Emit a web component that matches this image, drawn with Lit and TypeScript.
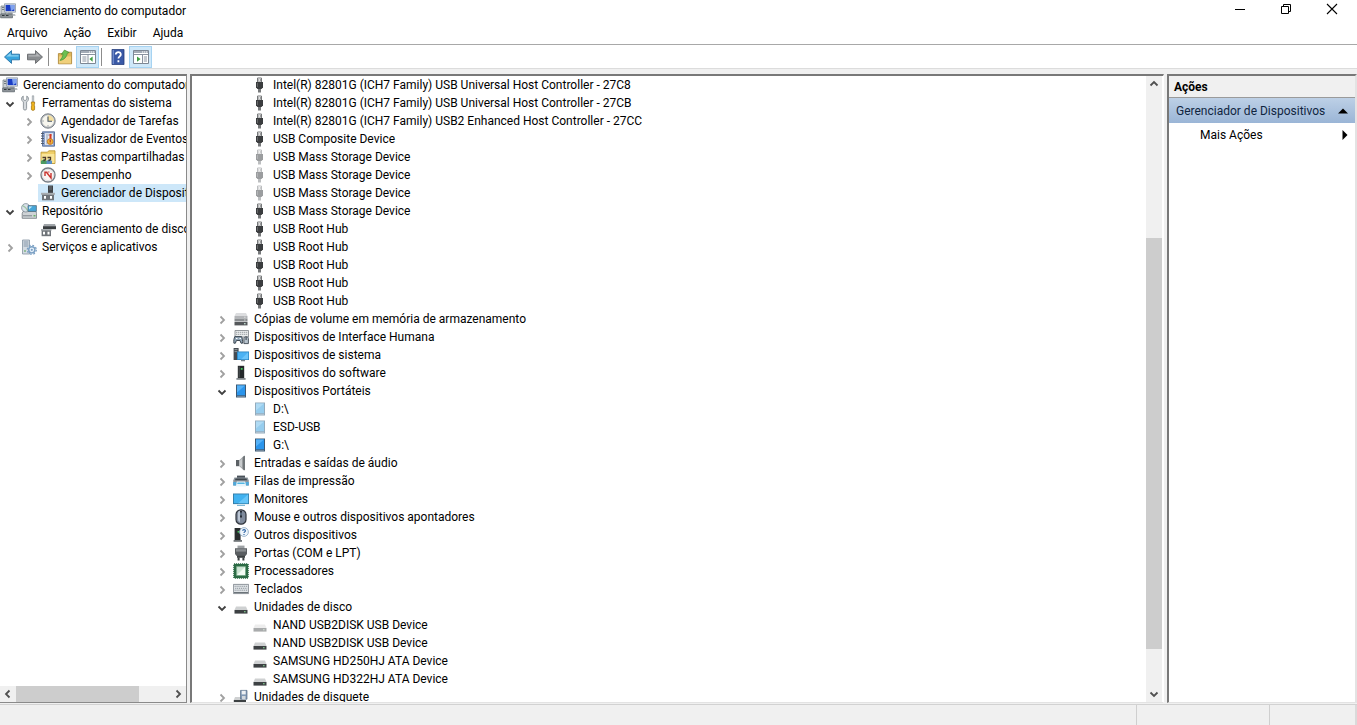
import { LitElement, html, css, svg, nothing, TemplateResult } from "lit";
import { customElement, property } from "lit/decorators.js";
import { classMap } from "lit/directives/class-map.js";

interface TreeNode {
  label: string;
  icon: string;
  open?: boolean;
  expandable?: boolean;
  selected?: boolean;
  children?: TreeNode[];
}

const usb = (body: string, metal: string) => svg`
  <path d="M5.5 1h4v4h-4z" fill="#fff" stroke=${metal} stroke-width="1"/>
  <path d="M6.3 2.4h1v1.2h-1zM8 2.4h1v1.2H8z" fill=${body}/>
  <path d="M4 5h7v5.2L9.6 12H5.4L4 10.2z" fill=${body}/>
  <path d="M6 12h3v3.5H6z" fill=${metal}/><path d="M5 6h1v4H5z" fill=${metal} opacity=".7"/>`;

const drive = (top: string, front: string, led: string) => svg`
  <path d="M3 7.4h10l1.5 3.6h-13z" fill=${top}/>
  <path d="M1.5 11h13v3.6h-13z" fill=${front}/>
  <path d="M11 12.3h1.6v1H11z" fill=${led}/>`;

const tablet = (a: string, b: string, frame: string) => svg`
  <path d="M3 1.5h10v13H3z" fill=${frame}/>
  <path d="M4 2.5h8v9.8H4z" fill=${a}/><path d="M4 2.5h8L4 9.500z" fill=${b}/>
  <path d="M4 12.900h8v.9H4z" fill="#fff" opacity=".35"/>`;

const panel = (body: TemplateResult) => svg`
  <path d="M.5 1.5h15v13H.5z" fill="#fff" stroke="#7d8794"/>
  <path d="M1 2h14v2H1z" fill="#a3abb6"/>
  <path d="M9 2.4h1.2v1.2H9zM11 2.4h1.2v1.2H11zM13 2.4h1.2v1.2H13z" fill="#fff"/>
  <path d="M1 5.500h14" stroke="#8a93a0"/>${body}`;

const ICONS: Record<string, TemplateResult> = {
  computer: svg`
    <path d="M1 3h5v8H1z" fill="#c9cdd0" stroke="#7c858c" stroke-width=".8"/>
    <path d="M2 4.5h3M2 6.5h3" stroke="#59656d" stroke-width=".8"/>
    <path d="M4.5.8h11v8.4h-11z" fill="#dfe4ea" stroke="#8d98a5" stroke-width=".8"/>
    <path d="M5.6 1.9h8.8v6.2H5.6z" fill="#1a3cc4"/><path d="M10 1.9h4.4v4L11 8z" fill="#7fa2ee"/>
    <path d="M8 9.3h4l1 1.7H7z" fill="#a7adb3"/>
    <path d="M.6 11h11.900v3.800H.6z" fill="#8d9398" stroke="#596167" stroke-width=".7"/>
    <path d="M2 12.5h2.500M6 12.5h2.500" stroke="#30383d"/><path d="M12.500 11h2.500l.6 2h-3z" fill="#b9bec2"/>`,
  tools: svg`
    <path d="M2.2 1v3.4L4 5.7l1.8-1.3V1C7.5 2 8 4 7 5.6L5.6 7v6.5a1.6 1.6 0 0 1-3.2 0V7L1 5.6C0 4 .6 2 2.2 1z" fill="#d6dade" stroke="#7d868d" stroke-width=".8"/>
    <path d="M11.300.8h1.400v6.4h-1.400z" fill="#e3e6e8" stroke="#7d868d" stroke-width=".6"/>
    <path d="M10.400 7h3.200v2l-.6 1 .6 1v3.4c0 1.2-3.200 1.2-3.200 0V11l.6-1-.6-1z" fill="#f1b61f" stroke="#9b6b08" stroke-width=".7"/>`,
  clock: svg`
    <circle cx="8" cy="8" r="7.2" fill="#b9bdc1" stroke="#6d747b" stroke-width=".9"/>
    <circle cx="8" cy="8" r="5.8" fill="#f7f6ee"/>
    <path d="M8 8V2.2A5.8 5.8 0 0 1 13.8 8z" fill="#f3dfa0"/>
    <path d="M8 3.6V8.3h4" fill="none" stroke="#4a5661" stroke-width="1.1"/>
    <path d="M8 12.4v1M2.6 8h1" stroke="#4a5661" stroke-width=".8"/>`,
  events: svg`
    <path d="M2.5.8h12v14.4h-12z" fill="#8fa5cf" stroke="#49618f" stroke-width=".8"/>
    <path d="M5 2.2h8v11.6H5z" fill="#e7ebf2"/>
    <path d="M6 4h6M6 6h2M6 8h2M6 10h2M6 12h2" stroke="#7e8da8" stroke-width=".8"/>
    <path d="M1 2.5h3M1 5h3M1 7.5h3M1 10h3M1 12.5h3" stroke="#4c5866" stroke-width=".9"/>
    <path d="M9.500 3h2v5h-2z" fill="#d63a24"/><circle cx="10.2" cy="10.6" r="2.9" fill="#f0b53a" stroke="#b9620d" stroke-width=".7"/>
    <path d="M10.2 8.8v2.2M10.2 11.6v.8" stroke="#a22" stroke-width="1"/>`,
  shared: svg`
    <path d="M1 3.2h6.500L8.700 1.800H15v12.700H1z" fill="#f0d06a" stroke="#b9922c" stroke-width=".8"/>
    <path d="M1.6 5h12.8V14H1.6z" fill="#f9e59a"/>
    <path d="M1 15v-3l3-2 3 2v3z" fill="#4c9b62"/><path d="M6.500 15v-3l2.500-2 3 2v3z" fill="#5a8fc4"/>
    <path d="M2.500 8.500h3v2l-2 1.500M7.500 8.500h3v2L8.500 12" fill="none" stroke="#4d3a2a" stroke-width="1.300"/>`,
  perf: svg`
    <circle cx="8" cy="8" r="7" fill="#fff" stroke="#777e85" stroke-width="1.4"/>
    <circle cx="8" cy="8" r="5.6" fill="#fbf5f3" stroke="#c7cace" stroke-width=".6"/>
    <path d="M5 9V5.200h1.500L11 11V6" fill="none" stroke="#c8322d" stroke-width="1.4"/>
    <path d="M7.500 5h2" stroke="#c8322d" stroke-width=".9"/>`,
  devmgr: svg`
    <path d="M8 .5h5v8H8z" fill="#3f4347"/><path d="M9 2h3M9 4h3" stroke="#7d8388" stroke-width=".8"/>
    <path d="M2 9h12v6.300H2z" fill="#6f7479"/><path d="M1 7.800h14v2H1z" fill="#a8adb1"/>
    <path d="M4 11h2v2.8H4zM10 11h2v2.8h-2z" fill="#fff"/>`,
  storage: svg`
    <path d="M2 8.5h13l.6 2v4.8H1.2v-4.8z" fill="#cfd3d6" stroke="#6e767c" stroke-width=".8"/>
    <path d="M2 12.8h9" stroke="#7b838a"/><path d="M12.5 12.2h2v1.2h-2z" fill="#4cae4c"/>
    <circle cx="4.8" cy="4.8" r="4.2" fill="#d9e2ea" stroke="#7d8a94" stroke-width=".8"/>
    <path d="M4.8 4.8 1.5 2.4M4.8 4.8l2 3" stroke="#9cc3a2" stroke-width="1.2"/>
    <path d="M7 2.6h8.4v5.8H7z" fill="#46a6d8" stroke="#58707f" stroke-width=".8"/><path d="M8 3.4h3.4L8 6.6z" fill="#c3e6f7"/>`,
  diskmgr: svg`
    <path d="M4 3h11l1 2.4H3z" fill="#a1a6aa"/><path d="M3 5.2h13v3H3z" fill="#3a3e41"/>
    <path d="M1 8h10.500v1.8H1z" fill="#a8adb1"/><path d="M1.6 9.4h9.400v5.8H1.6z" fill="#6f7479"/>
    <path d="M3 10.8h2v2.800H3zM7.500 10.800h2v2.800h-2z" fill="#fff"/>`,
  services: svg`
    <path d="M1.5 1h7v14h-7z" fill="#d4dbe2" stroke="#8493a2" stroke-width=".8"/>
    <path d="M2.6 3h4.8M2.6 5h4.8M2.6 7h4.8" stroke="#7d90a4" stroke-width=".9"/>
    <path d="M3 12h2" stroke="#58a258"/>
    <circle cx="10.8" cy="10.8" r="3.1" fill="#e6f0f9" stroke="#7ba0c4" stroke-width="1.5"/>
    <circle cx="10.8" cy="10.8" r="4.5" fill="none" stroke="#7ba0c4" stroke-width="1.3" stroke-dasharray="1.8 1.73"/>
    <circle cx="10.8" cy="10.8" r="1.1" fill="#7ba0c4"/>`,
  usb: usb("#3b3d3f", "#77797b"),
  usbOff: usb("#9b9d9f", "#bcbec0"),
  volume: svg`
    <path d="M3 2h10l1.5 3h-13z" fill="#dcdddf"/><path d="M1.5 5h13v2.600h-13z" fill="#b3b5b8"/>
    <path d="M1.5 7.600h13v2.8h-13z" fill="#8b8e91"/><path d="M1.5 10.900h13v3.500h-13z" fill="#55585b"/>
    <path d="M11 12.200h1.6v1H11z" fill="#dfe"/><path d="M11 6.200h1.6M11 9h1.6" stroke="#eee" stroke-width=".7"/>`,
  hid: svg`
    <path d="M2 1.5h13.5v6.500H2z" fill="#eceeef" stroke="#7c8186" stroke-width=".8"/>
    <path d="M3.2 3.3h11M3.2 5.3h11" stroke="#868b90" stroke-dasharray="1.1 .9"/>
    <path d="M1.800 7.600h6.800c.9 2 1.200 4 .9 6.600H8l-1-2.700H3.400l-1 2.700H.9c-.3-2.600 0-4.600.9-6.600z" fill="#8ea2b3" stroke="#3f4a54" stroke-width="1"/>
    <path d="M3 9.500h1.500M6.500 9.500H8" stroke="#fff" stroke-width="1"/>
    <path d="M10.900 14.600V9.6c0-2.600 4.500-2.600 4.500 0v5z" fill="#b7c3cd" stroke="#3f4a54" stroke-width=".9"/>
    <path d="M13.100 8v3" stroke="#333b44"/>`,
  system: svg`
    <path d="M.6 1h5v12h-5z" fill="#454b51"/><path d="M1.500 2.6h3M1.500 4.6h3" stroke="#a2a9ae" stroke-width=".8"/>
    <path d="M4 4.5h12v8.500H4z" fill="#2880bd"/><path d="M4.800 5.3h10.400v6.900H4.800z" fill="#4bb1f3"/>
    <path d="M15.200 5.3v6.900H8z" fill="#6cc4fa"/><path d="M8 13.200h4v1H8z" fill="#59646c"/>`,
  software: svg`
    <path d="M4.800.8h6.400v12.4H4.800z" fill="#25292b"/><path d="M5.600 1.6h1.2v11H5.600z" fill="#4a4f52"/>
    <path d="M7.800 3h1.8v1.8H7.800z" fill="#3fc95a"/><path d="M3.400 13h9.2v1.8H3.4z" fill="#83888b"/>`,
  tablet: tablet("#2b95ec", "#55b1f7", "#3b5873"),
  tabletOff: tablet("#96cdee", "#b0dbf4", "#93aabb"),
  audio: svg`
    <path d="M3 5h3.400v6.200H3z" fill="#5c6165"/><path d="M6.4 5 11 .8v14.600l-4.6-4.200z" fill="#a2a6a9"/>
    <path d="M9.800 1.900 12 .6v15l-2.200-1.300z" fill="#717679"/><path d="M6.6 6 9 3.8v8.6L6.6 10.6z" fill="#c8cbcd"/>`,
  printer: svg`
    <path d="M4 2.6h8v3H4z" fill="#4a525a"/><path d="M1.4 4.600h13.2l1.2 2.800v5H.2v-5z" fill="#8c959c"/>
    <path d="M2.500 5.400h11l.5 1.800H2z" fill="#3f464c"/><path d="M.2 9h3.400v3.400H.2zM12.400 9h3.400v3.400h-3.400z" fill="#4fa9db"/>
    <path d="M3.8 8.600h8.4l1 5H2.8z" fill="#e9f5fb"/><path d="M4.6 9.600h6.8l.4 1.400H4.200z" fill="#54b7e4"/>`,
  monitor: svg`
    <path d="M0 2.5h16v10.6H0z" fill="#347ca6"/><path d="M.9 3.4h14.2v8.8H.9z" fill="#41b2f0"/>
    <path d="M15.1 3.4v8.8H5z" fill="#66c5f8"/><path d="M4 13.8h8v1H4z" fill="#5fa7cb"/>`,
  mouse: svg`
    <rect x="3" y=".8" width="10" height="14.4" rx="4.8" fill="#7f8a9b" stroke="#30353d" stroke-width="1.2"/>
    <path d="M5 4c0-1.6 1-2 2-2.2V13c-1.4-.5-2-1.4-2-3z" fill="#bcc6d4"/>
    <path d="M7 2h2v6.6H7z" fill="#262b33"/><path d="M7.6 3.4h.8v3h-.8z" fill="#a3c6ea"/>`,
  other: svg`
    <path d="M1.6 1h6v12h-6z" fill="#282c2d"/><path d="M4.6 4h1.6v1.6H4.6z" fill="#45c45d"/>
    <path d="M.6 13h8.4v1.8H.6z" fill="#6e7376"/>
    <circle cx="11" cy="5" r="4.4" fill="#eef5fb" stroke="#8aa6bf" stroke-width=".8"/>
    <path d="M9.6 3.8c.2-1.7 3-1.5 2.8.1-.1 1-1.4 1-1.4 2.1M11 6.9v1" fill="none" stroke="#2c62a4" stroke-width="1.1"/>`,
  port: svg`
    <path d="M4.500.6h7v3h-7z" fill="#9da1a4"/><path d="M2 3.2h12v5.800l-1.6 2H3.6L2 9z" fill="#5a5e61"/>
    <path d="M3 4.200h10v2.400H3z" fill="#8b8f92"/><path d="M4 10.800h8v2H4z" fill="#3c4042"/>
    <path d="M4.600 12.6h2v2.800h-2zM9.4 12.6h2v2.800h-2z" fill="#3c4042"/>`,
  cpu: svg`
    <rect x="1" y="1" width="14" height="14" fill="#2c6b45" stroke="#2c6b45" stroke-width="1.6" stroke-dasharray="1.2 .8"/>
    <path d="M3.6 3.6h8.8v8.8H3.6z" fill="#cfe6d5" stroke="#7fae8e" stroke-width=".8"/><path d="M12 4v8H4z" fill="#f4fbf5"/>`,
  keyboard: svg`
    <path d="M.4 3.4h15.2v9.2H.4z" fill="#dfe3e6" stroke="#777f87" stroke-width=".8"/>
    <path d="M1.6 5.3h13M2.2 7.3h12M1.6 9.2h13" stroke="#8c949c" stroke-dasharray="1.1 .8"/>
    <path d="M1 11.6h14" stroke="#5f676e"/>`,
  drive: drive("#cfd1d2", "#3d4143", "#8ee09a"),
  driveOff: drive("#ededed", "#a9abac", "#d4e5d6"),
  floppy: svg`
    <path d="M2 8h7l1 3H.8z" fill="#cfd1d2"/><path d="M.8 11H13v3.4H.8z" fill="#3d4143"/>
    <path d="M7.500 1.4H14v8.8H7.500z" fill="#8299b5" stroke="#566b85" stroke-width=".7"/>
    <path d="M8.700 1.8h4v3.6h-4z" fill="#eef1f4"/><path d="M9 7h3.500v3.2H9z" fill="#d3d8dd"/>`,
  back: svg`<path d="M.5 8 7.500 1.600v3.600h8v5.600h-8v3.600z" fill="#37a4dd" stroke="#2a73a6" stroke-width=".9"/>
    <path d="M2.4 7.6 6.700 3.700v2.500h7.800v1.400z" fill="#8bd2f2"/>`,
  forward: svg`<path d="M15.500 8 8.500 1.600v3.600h-8v5.600h8v3.600z" fill="#8a8d90" stroke="#66696c" stroke-width=".9"/>
    <path d="M13.6 7.6 9.300 3.700v2.500H1.500v1.400z" fill="#b3b5b7"/>`,
  up: svg`
    <path d="M1.4 4.6h5l1-1.4h7.2v11.6H1.4z" fill="#e0b85a" stroke="#a98232" stroke-width=".8"/>
    <path d="M2 7.4h12v7H2z" fill="#f0d07c"/>
    <path d="M3 11.400C4.400 9.800 6 7.400 6 4.800l-1.800.6L7.500 1l4.700 2.600-1.900.6C10 7.800 7 11 3 11.400z" fill="#6cc052" stroke="#3b8a2c" stroke-width=".6"/>`,
  paneLeft: panel(svg`<path d="M8 6v8.500" stroke="#8a93a0"/><path d="M2.4 8h4M2.4 10h4M2.4 12h4" stroke="#8a93a0"/>
    <path d="M12.6 7.400v5.4L9.400 10.1z" fill="#3f9e42"/>`),
  paneRight: panel(svg`<path d="M9.500 6v8.500" stroke="#8a93a0"/><path d="M10.8 8h3.2M10.8 10h3.2M10.8 12h3.2" stroke="#8a93a0"/>
    <path d="M4 7.400v5.4l3.600-2.7z" fill="#3f9e42"/>`),
  help: svg`<path d="M2 .4h12v15.2H2z" fill="#3a59a6" stroke="#243b78" stroke-width=".8"/><path d="M2.6 1h1.4v14H2.6z" fill="#6f8aca"/>
    <path d="M5.8 5.6c0-3.4 5.2-3.2 5 0-.1 1.8-2.4 1.8-2.4 4M8.4 11.2v2" fill="none" stroke="#fff" stroke-width="1.8"/>`,
};

const icon = (name: string) =>
  html`<svg class="icon" viewBox="0 0 16 16" width="16" height="16" aria-hidden="true">${ICONS[name]}</svg>`;

const ARROWS: Record<string, string> = {
  up: "M1.500 6.500 5 3l3.500 3.500",
  down: "M1.500 3.500 5 7l3.500-3.500",
  left: "M6.500 1.500 3 5l3.500 3.500",
  right: "M3.500 1.500 7 5 3.500 8.500",
};

const arrow = (dir: string) => html`<svg class="arrow" viewBox="0 0 10 10" width="10" height="10" aria-hidden="true">
  <path d=${ARROWS[dir]} fill="none" stroke="currentColor" stroke-width="1.800" />
</svg>`;

const shared = css`
  * { box-sizing: border-box; }
  button {
    display: flex;
    align-items: center;
    justify-content: center;
    margin: 0;
    padding: 0;
    border: 0;
    background: none;
    color: inherit;
    font: inherit;
  }
  svg { display: block; flex: none; }
`;

@customElement("device-tree")
class DeviceTree extends LitElement {
  @property({ attribute: false }) nodes: TreeNode[] = [];
  @property() label = "";

  static styles = [
    shared,
    css`
      :host { display: block; }
      ul { list-style: none; margin: 0; padding: 0; }
      ul ul { padding-left: 19px; }
      .row { display: flex; align-items: center; height: 18px; }
      .toggle { width: 19px; height: 18px; flex: none; color: #a0a0a0; padding-top: 2px; }
      .toggle.open { color: #404040; }
      .item { display: flex; align-items: center; gap: 5px; flex: 1; min-width: 0; height: 18px; padding-left: 2px; }
      .item.selected { background: #cde7f9; }
      .label { white-space: pre; line-height: 18px; }
    `,
  ];

  private node(n: TreeNode): TemplateResult {
    const expandable = n.expandable || n.children;
    return html`<li role="treeitem" aria-selected=${n.selected ? "true" : "false"}>
      <div class="row">
        ${expandable
          ? html`<button class=${classMap({ toggle: true, open: !!n.open })} aria-label=${n.label}>
              ${arrow(n.open ? "down" : "right")}
            </button>`
          : html`<span class="toggle"></span>`}
        <div class=${classMap({ item: true, selected: !!n.selected })}>
          ${icon(n.icon)}<span class="label">${n.label}</span>
        </div>
      </div>
      ${n.children && n.open ? html`<ul role="group">${n.children.map((c) => this.node(c))}</ul>` : nothing}
    </li>`;
  }

  render() {
    return html`<ul role="tree" aria-label=${this.label}>${this.nodes.map((n) => this.node(n))}</ul>`;
  }
}

@customElement("scroll-bar")
class ScrollBar extends LitElement {
  @property({ reflect: true }) axis: "x" | "y" = "y";
  @property({ type: Number }) before = 0;
  @property({ type: Number }) size = 1;
  @property({ type: Number }) after = 0;

  static styles = [
    shared,
    css`
      :host { display: flex; flex: none; background: #f0f0f0; color: #505050; }
      :host([axis="y"]) { flex-direction: column; width: 16px; }
      :host([axis="x"]) { height: 16px; }
      button { width: 16px; height: 16px; flex: none; }
      .track { display: flex; flex: 1; flex-direction: inherit; }
      .thumb { background: #cdcdcd; }
    `,
  ];

  render() {
    const y = this.axis === "y";
    return html`
      <button aria-label=${y ? "Para cima" : "Para a esquerda"}>${arrow(y ? "up" : "left")}</button>
      <div class="track">
        <div style="flex-grow:${this.before}"></div>
        <div class="thumb" style="flex-grow:${this.size}"></div>
        <div style="flex-grow:${this.after}"></div>
      </div>
      <button aria-label=${y ? "Para baixo" : "Para a direita"}>${arrow(y ? "down" : "right")}</button>
    `;
  }
}

const CONSOLE: TreeNode[] = [
  {
    label: "Ferramentas do sistema", icon: "tools", open: true,
    children: [
      { label: "Agendador de Tarefas", icon: "clock", expandable: true },
      { label: "Visualizador de Eventos", icon: "events", expandable: true },
      { label: "Pastas compartilhadas", icon: "shared", expandable: true },
      { label: "Desempenho", icon: "perf", expandable: true },
      { label: "Gerenciador de Dispositivos", icon: "devmgr", selected: true },
    ],
  },
  {
    label: "Repositório", icon: "storage", open: true,
    children: [{ label: "Gerenciamento de disco", icon: "diskmgr" }],
  },
  { label: "Serviços e aplicativos", icon: "services", expandable: true },
];

const leaf = (icon: string, ...labels: string[]): TreeNode[] => labels.map((label) => ({ label, icon }));
const closed = (label: string, icon: string): TreeNode => ({ label, icon, expandable: true });

const USB_DEVICES: TreeNode[] = [
  ...leaf(
    "usb",
    "Intel(R) 82801G (ICH7 Family) USB Universal Host Controller - 27C8",
    "Intel(R) 82801G (ICH7 Family) USB Universal Host Controller - 27CB",
    "Intel(R) 82801G (ICH7 Family) USB2 Enhanced Host Controller - 27CC",
    "USB Composite Device",
  ),
  ...leaf("usbOff", "USB Mass Storage Device", "USB Mass Storage Device", "USB Mass Storage Device"),
  ...leaf("usb", "USB Mass Storage Device", "USB Root Hub", "USB Root Hub", "USB Root Hub", "USB Root Hub", "USB Root Hub"),
];

const DEVICES: TreeNode[] = [
  closed("Cópias de volume em memória de armazenamento", "volume"),
  closed("Dispositivos de Interface Humana", "hid"),
  closed("Dispositivos de sistema", "system"),
  closed("Dispositivos do software", "software"),
  {
    label: "Dispositivos Portáteis", icon: "tablet", open: true,
    children: [...leaf("tabletOff", "D:\\", "ESD-USB"), ...leaf("tablet", "G:\\")],
  },
  closed("Entradas e saídas de áudio", "audio"),
  closed("Filas de impressão", "printer"),
  closed("Monitores", "monitor"),
  closed("Mouse e outros dispositivos apontadores", "mouse"),
  closed("Outros dispositivos", "other"),
  closed("Portas (COM e LPT)", "port"),
  closed("Processadores", "cpu"),
  closed("Teclados", "keyboard"),
  {
    label: "Unidades de disco", icon: "drive", open: true,
    children: [
      ...leaf("driveOff", "NAND USB2DISK USB Device"),
      ...leaf("drive", "NAND USB2DISK USB Device", "SAMSUNG HD250HJ ATA Device", "SAMSUNG HD322HJ ATA Device"),
    ],
  },
  closed("Unidades de disquete", "floppy"),
];

@customElement("app-root")
class AppRoot extends LitElement {
  static styles = [
    shared,
    css`
      :host {
        display: flex;
        flex-direction: column;
        height: 100vh;
        overflow: hidden;
        background: #f0f0f0;
        color: #000;
        font: 12px/18px Roboto, "Open Sans", sans-serif;
      }
      .titlebar { display: flex; align-items: center; height: 22px; background: #fff; }
      .title { flex: 1; margin: 0; padding-left: 4px; font: inherit; }
      .window-buttons { display: flex; align-self: flex-start; padding-right: 2px; }
      .window-buttons button { width: 46px; height: 18px; }
      .menu { display: flex; gap: 16px; height: 22px; padding-left: 7px; background: #fff; }
      .toolbar {
        display: flex;
        align-items: center;
        height: 25px;
        background: #fff;
        border-top: 1px solid #a8a8a8;
        border-bottom: 1px solid #dcdcdc;
      }
      .tool { width: 23px; height: 22px; }
      .tool.active { background: #cfe8f9; border: 1px solid #a6d3f2; }
      .separator { width: 1px; height: 18px; margin: 0 4px 0 2px; background: #8c8c8c; }
      .workspace {
        display: grid;
        grid-template-columns: 187px minmax(0, 1fr) 190px;
        gap: 3px;
        flex: 1;
        min-height: 0;
        padding: 5px 0 1px;
      }
      .console, .devices, .actions {
        display: flex;
        min-width: 0;
        min-height: 0;
        overflow: hidden;
        background: #fff;
        border-top: 2px solid #787878;
      }
      .console { flex-direction: column; border-right: 1px solid #8a8a8a; border-bottom: 1px solid #8a8a8a; }
      .tree-area { flex: 1; min-height: 0; overflow: hidden; }
      .root { display: flex; align-items: center; gap: 5px; height: 18px; padding-left: 2px; white-space: nowrap; }
      .devices { border-left: 2px solid #787878; border-right: 1px solid #fff; border-bottom: 1px solid #e3e3e3; }
      .devices .tree-area { padding-left: 20px; }
      .nested { padding-left: 19px; }
      .devices scroll-bar { margin-right: 1px; }
      .actions {
        flex-direction: column;
        border-left: 2px solid #787878;
        border-right: 2px solid #e3e3e3;
        border-bottom: 1px solid #e3e3e3;
      }
      .actions-title {
        height: 22px;
        margin: 0;
        padding: 2px 5px;
        border-bottom: 1px solid #9a9a9a;
        background: #f0f0f0;
        font: inherit;
        font-weight: 700;
      }
      .group {
        justify-content: space-between;
        height: 25px;
        padding: 0 7px;
        background: linear-gradient(#bdd0e6, #9ab5d6);
        color: #10253f;
      }
      .more { justify-content: space-between; height: 24px; padding: 0 7px 0 31px; }
      .status { display: flex; height: 21px; border-top: 1px solid #d2d2d2; }
      .status-main { flex: 1; }
      .status-cell { border-left: 1px solid #cfcfcf; width: 133px; }
      .status-cell.last { width: 88px; border-right: 2px solid #dadada; }
    `,
  ];

  render() {
    return html`
      <header class="titlebar">
        ${icon("computer")}
        <h1 class="title">Gerenciamento do computador</h1>
        <div class="window-buttons">
          <button aria-label="Minimizar">
            <svg width="12" height="12" viewBox="0 0 12 12"><path d="M1 6.500h10" stroke="#000" /></svg>
          </button>
          <button aria-label="Restaurar">
            <svg width="12" height="12" viewBox="0 0 12 12">
              <path d="M1.500 3.500h7v7h-7zM3.500 3.500v-2h7v7h-2" fill="none" stroke="#000" />
            </svg>
          </button>
          <button aria-label="Fechar">
            <svg width="12" height="12" viewBox="0 0 12 12">
              <path d="M1 1l10 10M11 1L1 11" stroke="#000" stroke-width="1.100" />
            </svg>
          </button>
        </div>
      </header>
      <nav class="menu">
        ${["Arquivo", "Ação", "Exibir", "Ajuda"].map((m) => html`<button>${m}</button>`)}
      </nav>
      <div class="toolbar" role="toolbar">
        <button class="tool" aria-label="Voltar">${icon("back")}</button>
        <button class="tool" aria-label="Avançar">${icon("forward")}</button>
        <span class="separator"></span>
        <button class="tool" aria-label="Um nível acima">${icon("up")}</button>
        <button class="tool active" aria-label="Árvore de console">${icon("paneLeft")}</button>
        <span class="separator"></span>
        <button class="tool" aria-label="Ajuda">${icon("help")}</button>
        <button class="tool active" aria-label="Painel de ações">${icon("paneRight")}</button>
      </div>
      <main class="workspace">
        <section class="console">
          <div class="tree-area">
            <div class="root">${icon("computer")}<span>Gerenciamento do computador</span></div>
            <device-tree label="Console" .nodes=${CONSOLE}></device-tree>
          </div>
          <scroll-bar axis="x" .before=${0} .size=${123} .after=${31}></scroll-bar>
        </section>
        <section class="devices">
          <div class="tree-area">
            <device-tree class="nested" label="Controladores USB" .nodes=${USB_DEVICES}></device-tree>
            <device-tree label="Dispositivos" .nodes=${DEVICES}></device-tree>
          </div>
          <scroll-bar axis="y" .before=${146} .size=${411} .after=${37}></scroll-bar>
        </section>
        <aside class="actions">
          <h2 class="actions-title">Ações</h2>
          <button class="group">
            <span>Gerenciador de Dispositivos</span>
            <svg width="10" height="6" viewBox="0 0 10 6"><path d="M0 5.500 5 .5l5 5z" fill="#000" /></svg>
          </button>
          <button class="more">
            <span>Mais Ações</span>
            <svg width="6" height="10" viewBox="0 0 6 10"><path d="M.5 0l5 5-5 5z" fill="#000" /></svg>
          </button>
        </aside>
      </main>
      <footer class="status">
        <div class="status-main"></div>
        <div class="status-cell"></div>
        <div class="status-cell last"></div>
      </footer>
    `;
  }
}
